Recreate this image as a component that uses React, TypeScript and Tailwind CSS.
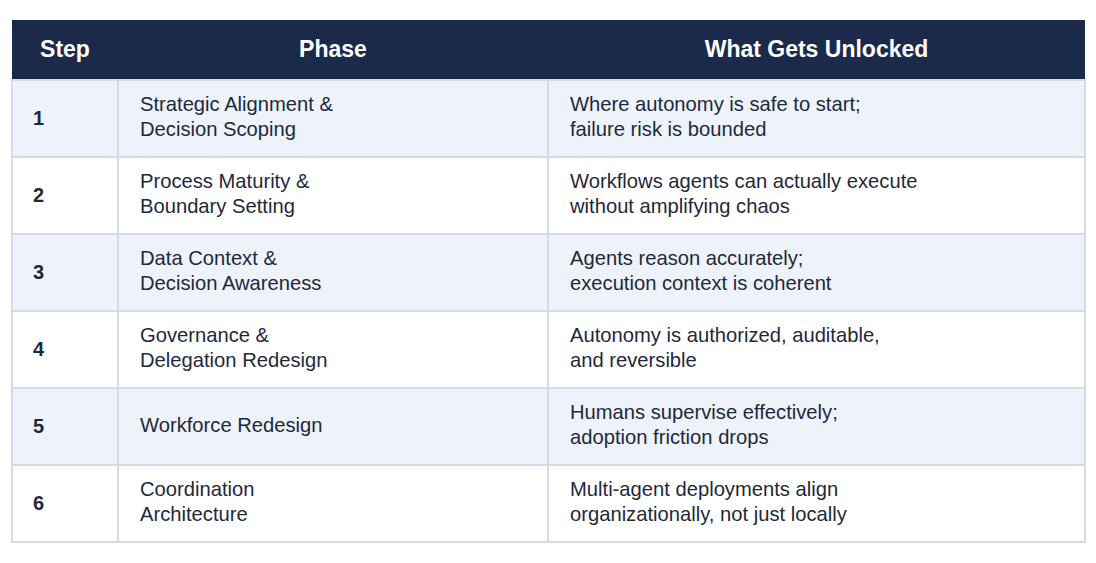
import React from "react";

const rows: [string, string[], string[]][] = [
  ["1", ["Strategic Alignment &", "Decision Scoping"], ["Where autonomy is safe to start;", "failure risk is bounded"]],
  ["2", ["Process Maturity &", "Boundary Setting"], ["Workflows agents can actually execute", "without amplifying chaos"]],
  ["3", ["Data Context &", "Decision Awareness"], ["Agents reason accurately;", "execution context is coherent"]],
  ["4", ["Governance &", "Delegation Redesign"], ["Autonomy is authorized, auditable,", "and reversible"]],
  ["5", ["Workforce Redesign"], ["Humans supervise effectively;", "adoption friction drops"]],
  ["6", ["Coordination", "Architecture"], ["Multi-agent deployments align", "organizationally, not just locally"]],
];

export default function App() {
  return (
    <div className="w-[1096px] h-[563px] bg-white pt-[20px] pl-[11px]" style={{ fontFamily: '"Liberation Sans", Arial, sans-serif' }}>
      <table className="w-[1075px] border-collapse text-[#1e293b]">
        <thead>
          <tr className="h-[60px] bg-[#1b2a4a] text-white text-[23px] font-bold">
            <th className="w-[106px] text-center">Step</th>
            <th className="w-[430px] text-center">Phase</th>
            <th className="text-center">What Gets Unlocked</th>
          </tr>
        </thead>
        <tbody>
          {rows.map(([n, p, w], i) => (
            <tr key={n} className={`h-[77px] ${i % 2 === 0 ? "bg-[#edf2fb]" : "bg-white"}`}>
              <td className="border-2 border-[#d5dbe6] pl-[20px] pb-[2px] text-[20px] font-bold">{n}</td>
              <td className="border-2 border-[#d5dbe6] pl-[21px] pb-[3px] text-[20.2px] leading-[25px]">
                {p.map((l) => (
                  <div key={l}>{l}</div>
                ))}
              </td>
              <td className="border-2 border-[#d5dbe6] pl-[21px] pb-[3px] text-[20.2px] leading-[25px]">
                {w.map((l) => (
                  <div key={l}>{l}</div>
                ))}
              </td>
            </tr>
          ))}
        </tbody>
      </table>
    </div>
  );
}
